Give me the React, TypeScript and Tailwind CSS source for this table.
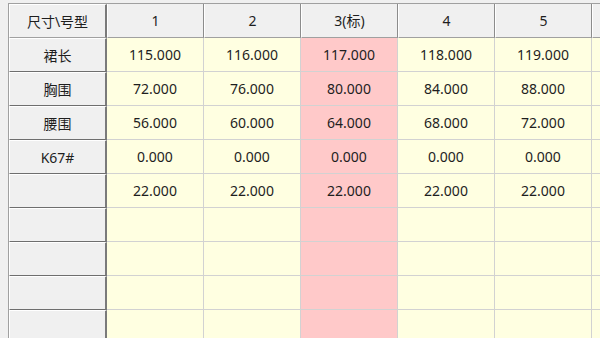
const cols = ["1", "2", "3(标)", "4", "5", ""]

const rows: { label: string; values: string[] }[] = [
  { label: "裙长", values: ["115.000", "116.000", "117.000", "118.000", "119.000", ""] },
  { label: "胸围", values: ["72.000", "76.000", "80.000", "84.000", "88.000", ""] },
  { label: "腰围", values: ["56.000", "60.000", "64.000", "68.000", "72.000", ""] },
  { label: "K67#", values: ["0.000", "0.000", "0.000", "0.000", "0.000", ""] },
  { label: "", values: ["22.000", "22.000", "22.000", "22.000", "22.000", ""] },
  { label: "", values: ["", "", "", "", "", ""] },
  { label: "", values: ["", "", "", "", "", ""] },
  { label: "", values: ["", "", "", "", "", ""] },
  { label: "", values: ["", "", "", "", "", ""] },
]

const STD = 2

function App() {
  return (
    <div
      className="w-[600px] h-[338px] overflow-hidden bg-[#f0f0f0] pt-[3px] pl-[8px] text-[14px] text-[#1e1e1e]"
      style={{ fontFamily: '"Noto Sans", "Noto Sans CJK SC", sans-serif' }}
    >
      <div className="grid grid-cols-[98px_97px_97px_97px_97px_97px_97px] border-t border-l border-[#a0a0a0] w-max">
        {/* header row */}
        <div className="h-[34px] flex items-center justify-center bg-[#f0f0f0] border-l border-t border-white border-r-2 border-r-[#7a7a7a] border-b border-b-[#a0a0a0]">
          尺寸\号型
        </div>
        {cols.map((c, i) => (
          <div
            key={i}
            className="h-[34px] flex items-center justify-center bg-[#f0f0f0] border-l border-white border-r border-r-[#8c8c8c] border-b border-b-[#a0a0a0]"
          >
            {c}
          </div>
        ))}

        {rows.map((r, ri) => (
          <div key={ri} className="contents">
            <div className="h-[34px] flex items-center justify-center bg-[#f0f0f0] border-l border-t border-white border-r-2 border-r-[#7a7a7a] border-b border-b-[#6e6e6e]">
              {r.label}
            </div>
            {r.values.map((v, ci) => (
              <div
                key={ci}
                className={
                  "h-[34px] flex items-center justify-center border-r border-b border-[#d2d2d2] " +
                  (ci === STD ? "bg-[#ffc9c9]" : "bg-[#ffffe1]")
                }
              >
                {v}
              </div>
            ))}
          </div>
        ))}
      </div>
    </div>
  )
}

export default App
